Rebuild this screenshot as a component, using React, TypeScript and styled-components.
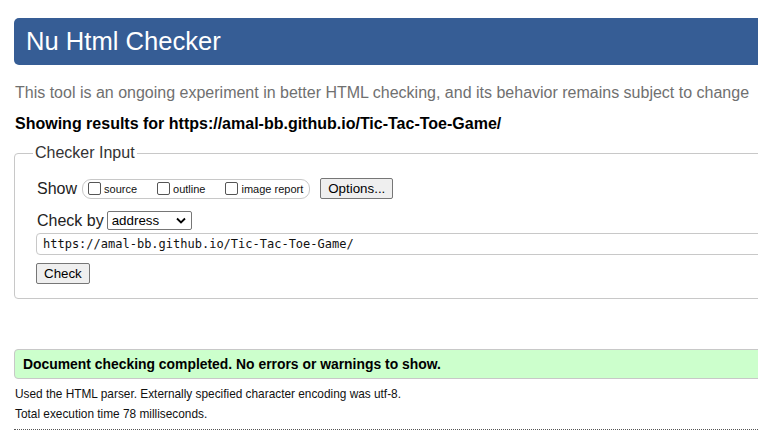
import React from "react";
import styled, { createGlobalStyle } from "styled-components";

const Global = createGlobalStyle`
  html, body { margin: 0; padding: 0; background: #fff; overflow: hidden; }
  body { font-family: "Liberation Sans", Arial, sans-serif; color: #000; }
`;

const Page = styled.div`
  width: 1000px;
  padding: 18px 0 0 14px;
`;

const Header = styled.h1`
  margin: 0;
  height: 47px;
  line-height: 47px;
  padding-left: 12px;
  background: #365d95;
  color: #fff;
  font-weight: normal;
  font-size: 25.6px;
  border-radius: 5px 0 0 5px;
`;

const Intro = styled.p`
  margin: 18px 0 0 1px;
  font-size: 16px;
  line-height: 19px;
  color: #707070;
`;

const Results = styled.p`
  margin: 12px 0 0 1px;
  font-size: 16px;
  line-height: 19px;
  font-weight: bold;
`;

const Field = styled.fieldset`
  margin: 11px 0 0 0;
  padding: 0 0 12px 22px;
  border: 1px solid #c8c8c8;
  border-radius: 4px;
  height: 155px;
  box-sizing: border-box;
`;

const Legend = styled.legend`
  margin-left: -4px;
  padding: 0 2px;
  font-size: 16px;
  color: #333;
  line-height: 18px;
`;

const Row = styled.div<{ $gap?: number; $top?: number }>`
  display: flex;
  align-items: center;
  gap: ${(p) => p.$gap ?? 4}px;
  margin-top: ${(p) => p.$top ?? 0}px;
`;

const Label = styled.span`
  font-size: 16px;
  color: #222;
`;

const Pill = styled.span`
  display: inline-flex;
  align-items: center;
  height: 20px;
  box-sizing: border-box;
  border: 1px solid #c8c8c8;
  border-radius: 9px;
  padding: 0 6px 0 5px;
  margin-left: 5px;
`;

const Opt = styled.label<{ $mr?: number }>`
  display: inline-flex;
  align-items: center;
  font-size: 11px;
  color: #111;
  margin-right: ${(p) => p.$mr ?? 0}px;
`;

const Box = styled.span`
  width: 11px;
  height: 11px;
  border: 1px solid #555;
  border-radius: 2px;
  margin-right: 3px;
  background: #fff;
`;

const Btn = styled.button<{ $ml?: number }>`
  font-family: "Liberation Sans", Arial, sans-serif;
  font-size: 13.33px;
  height: 21px;
  padding: 0 7px;
  margin-left: ${(p) => p.$ml ?? 0}px;
  background: #efefef;
  border: 1px solid #767676;
  border-radius: 2px;
  color: #000;
  line-height: 17px;
`;

const Select = styled.span`
  display: inline-flex;
  align-items: center;
  justify-content: space-between;
  width: 85px;
  height: 19px;
  box-sizing: border-box;
  border: 1px solid #767676;
  border-radius: 2px;
  padding: 0 5px 0 4px;
  font-size: 13.33px;
  color: #000;
`;

const UrlInput = styled.div`
  flex: 1;
  margin-left: -1px;
  height: 22px;
  box-sizing: border-box;
  border: 1px solid #c8c8c8;
  border-radius: 4px;
  padding-left: 6px;
  font-family: "DejaVu Sans Mono", "Liberation Mono", monospace;
  font-size: 12px;
  line-height: 20px;
  color: #111;
`;

const Done = styled.div`
  margin-top: 50px;
  height: 30px;
  box-sizing: border-box;
  border: 1px solid #c8c8c8;
  border-radius: 4px 0 0 4px;
  background: #ccffcc;
  padding-left: 8px;
  line-height: 28px;
  font-weight: bold;
  font-size: 13.9px;
`;

const Note = styled.p<{ $top?: number }>`
  margin: ${(p) => p.$top ?? 0}px 0 0 1px;
  font-size: 11.85px;
  line-height: 20px;
  color: #111;
`;

const Dotted = styled.div`
  margin-top: 5px;
  border-top: 1px dotted #555;
`;

export default function App() {
  return (
    <>
      <Global />
      <Page>
        <Header>Nu Html Checker</Header>
        <Intro>
          This tool is an ongoing experiment in better HTML checking, and its behavior remains subject to change
        </Intro>
        <Results>Showing results for https://amal-bb.github.io/Tic-Tac-Toe-Game/</Results>
        <Field>
          <Legend>Checker Input</Legend>
          <Row $top={16} $gap={0}>
            <Label>Show</Label>
            <Pill>
              <Opt $mr={20}><Box />source</Opt>
              <Opt $mr={20}><Box />outline</Opt>
              <Opt><Box />image report</Opt>
            </Pill>
            <Btn $ml={10}>Options...</Btn>
          </Row>
          <Row $top={12} $gap={3}>
            <Label>Check by</Label>
            <Select>
              address
              <svg width="10" height="7" viewBox="0 0 10 7">
                <path d="M1 1.5 L5 5.5 L9 1.5" fill="none" stroke="#000" strokeWidth="1.8" />
              </svg>
            </Select>
          </Row>
          <Row $top={3}>
            <UrlInput>https://amal-bb.github.io/Tic-Tac-Toe-Game/</UrlInput>
          </Row>
          <Row $top={8}>
            <Btn $ml={-1}>Check</Btn>
          </Row>
        </Field>
        <Done>Document checking completed. No errors or warnings to show.</Done>
        <Note $top={5}>Used the HTML parser. Externally specified character encoding was utf-8.</Note>
        <Note>Total execution time 78 milliseconds.</Note>
        <Dotted />
      </Page>
    </>
  );
}
